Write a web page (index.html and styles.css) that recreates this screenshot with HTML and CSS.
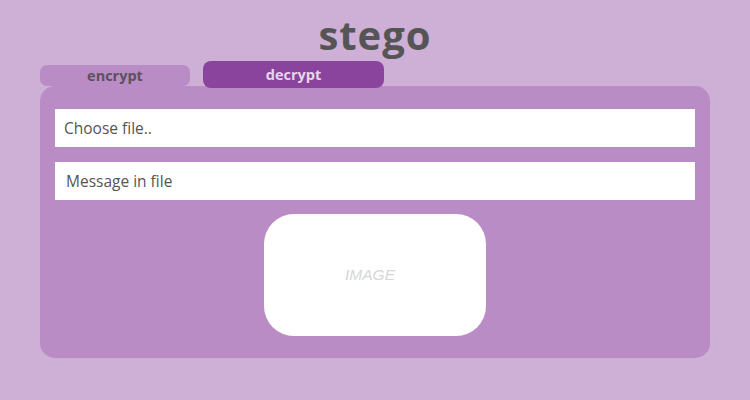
FILE: index.html
```html
<!DOCTYPE html>
<html>
<head>
<meta charset="utf-8">
<link rel="stylesheet" href="styles.css">
</head>
<body>
<header class="title">stego</header>
<nav class="tabs">
  <div class="tab tab-encrypt">encrypt</div>
  <div class="tab tab-decrypt">decrypt</div>
</nav>
<main class="panel">
  <div class="field field-file">Choose file..</div>
  <div class="field field-msg">Message in file</div>
  <div class="image-box">IMAGE</div>
</main>
</body>
</html>
```

FILE: styles.css
```css
html, body {
  margin: 0;
  padding: 0;
}
body {
  width: 750px;
  height: 400px;
  background: #ceafd6;
  font-family: "Open Sans", "DejaVu Sans", sans-serif;
  overflow: hidden;
}
.title {
  height: 61px;
  box-sizing: border-box;
  padding-top: 15px;
  text-align: center;
  font-size: 40px;
  line-height: 40px;
  font-weight: 700;
  letter-spacing: 1px;
  color: #565556;
}
.tabs {
  display: flex;
  align-items: flex-start;
  gap: 13px;
  margin-left: 40px;
  height: 25px;
}
.tab {
  display: flex;
  align-items: center;
  justify-content: center;
  font-size: 14.5px;
  font-weight: 700;
}
.tab-encrypt {
  margin-top: 4px;
  width: 150px;
  height: 21px;
  border-radius: 7px;
  background: #b98cc5;
  color: #5a525d;
}
.tab-decrypt {
  position: relative;
  z-index: 1;
  width: 181px;
  height: 27px;
  border-radius: 8px;
  background: #8b449d;
  color: #e6d6ea;
}
.panel {
  margin: 0 40px;
  height: 272px;
  box-sizing: border-box;
  padding: 23px 15px 0;
  border-radius: 15px;
  background: #b98cc5;
  display: flex;
  flex-direction: column;
  gap: 15px;
}
.field {
  height: 38px;
  background: #ffffff;
  display: flex;
  align-items: center;
  font-size: 15.5px;
  color: #555555;
}
.field-file {
  padding-left: 9px;
}
.field-msg {
  padding-left: 11px;
}
.image-box {
  align-self: center;
  margin-top: -1px;
  width: 222px;
  height: 122px;
  box-sizing: border-box;
  padding-right: 10px;
  border-radius: 30px;
  background: #ffffff;
  display: flex;
  align-items: center;
  justify-content: center;
  font-family: "Liberation Sans", Arial, sans-serif;
  font-size: 15.5px;
  font-style: italic;
  color: #d6d6d6;
}
```
